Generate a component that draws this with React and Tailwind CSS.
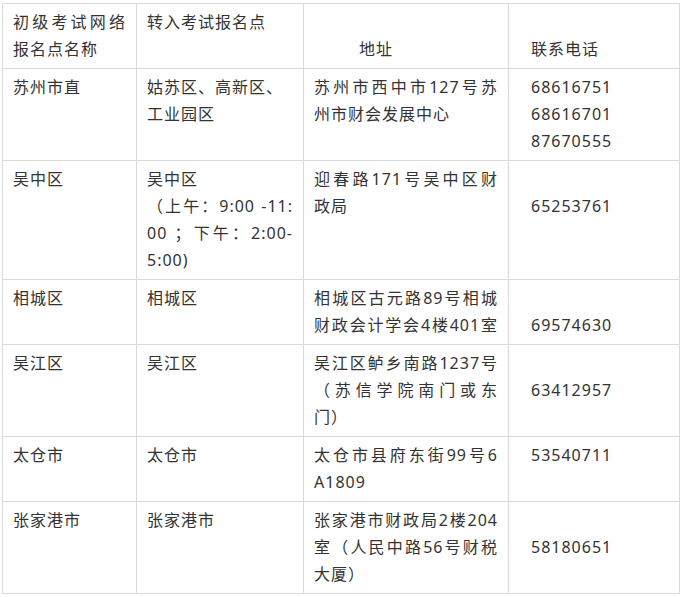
import React from 'react';

// each cell: array of lines, a line is [text, justify]
const rows = [
    [
        [['初级考试网络', true], ['报名点名称']],
        [['转入考试报名点']],
        [[''], ['地址']],
        [[''], ['联系电话']],
    ],
    [
        [['苏州市直']],
        [['姑苏区、高新区、'], ['工业园区']],
        [['苏州市西中市127号苏', true], ['州市财会发展中心']],
        [['68616751'], ['68616701'], ['87670555']],
    ],
    [
        [['吴中区']],
        [['吴中区'], ['（上午：9:00 -11:', true], ['00 ；下午：2:00-', true], ['5:00)']],
        [['迎春路171号吴中区财', true], ['政局']],
        [[''], ['65253761']],
    ],
    [
        [['相城区']],
        [['相城区']],
        [['相城区古元路89号相城', true], ['财政会计学会4楼401室', true]],
        [[''], ['69574630']],
    ],
    [
        [['吴江区']],
        [['吴江区']],
        [['吴江区鲈乡南路1237号', true], ['（苏信学院南门或东', true], ['门）']],
        [[''], ['63412957']],
    ],
    [
        [['太仓市']],
        [['太仓市']],
        [['太仓市县府东街99号6', true], ['A1809']],
        [['53540711']],
    ],
    [
        [['张家港市']],
        [['张家港市']],
        [['张家港市财政局2楼204', true], ['室（人民中路56号财税', true], ['大厦）']],
        [[''], ['58180651']],
    ],
];

const padding = ['pl-[10px] pr-[10px]', 'pl-[10px] pr-[10px]', 'pl-[10px] pr-[10px]', 'pl-[22px] pr-[10px]'];

const Cell = ({ lines, col, header }) => (
    <td className={`border border-[#dadada] align-top pt-[5px] pb-[5px] ${padding[col]} ${header && col === 2 ? 'pl-[55px]' : ''}`}>
        {lines.map(([text, justify], i) => (
            <div key={i} className={`h-[27px] whitespace-nowrap ${justify ? 'text-justify [text-align-last:justify] whitespace-normal' : ''}`}>
                {text || '\u00a0'}
            </div>
        ))}
    </td>
);

export default function App() {
    return (
        <div className="bg-white w-[682px] h-[597px] pl-[2px] pt-[3px]">
            <table
                className="table-fixed border-collapse w-[677px] text-[16px] leading-[27px] tracking-[1px] text-[#333]"
                style={{ fontFamily: '"Noto Sans", "Noto Sans CJK SC", sans-serif' }}
            >
                <colgroup>
                    <col className="w-[134px]" />
                    <col className="w-[167px]" />
                    <col className="w-[205px]" />
                    <col className="w-[171px]" />
                </colgroup>
                <tbody>
                    {rows.map((row, r) => (
                        <tr key={r}>
                            {row.map((lines, c) => (
                                <Cell key={c} lines={lines} col={c} header={r === 0} />
                            ))}
                        </tr>
                    ))}
                </tbody>
            </table>
        </div>
    );
}
